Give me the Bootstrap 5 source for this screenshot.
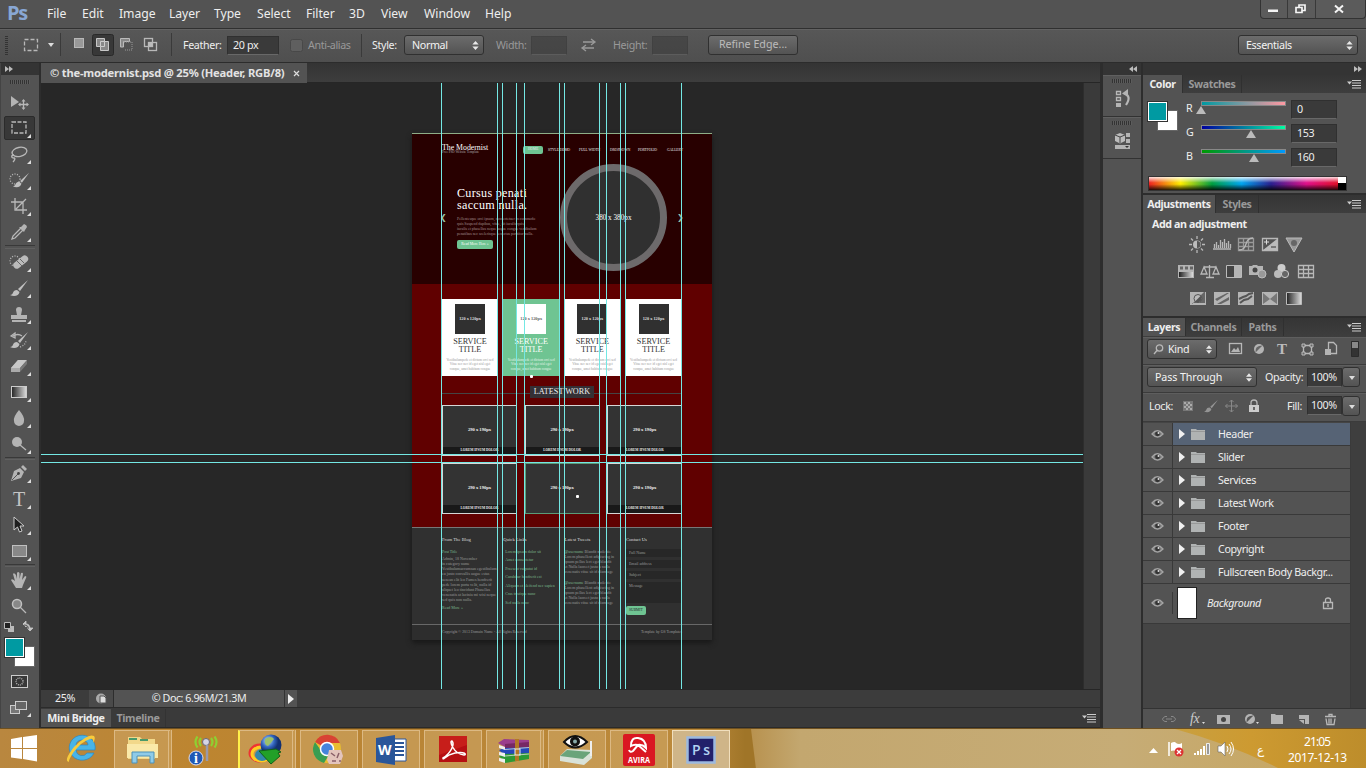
<!DOCTYPE html>
<html lang="en">
<head>
<meta charset="utf-8">
<title>the-modernist.psd</title>
<link href="https://cdn.jsdelivr.net/npm/bootstrap@5.3.0/dist/css/bootstrap.min.css" rel="stylesheet">
<script src="https://cdn.jsdelivr.net/npm/bootstrap@5.3.0/dist/js/bootstrap.bundle.min.js"></script>
<style>
html,body{height:768px;width:1366px;overflow:hidden}
body{background:#282828;color:#eee;font:10.7px/14px "Noto Sans","Open Sans",sans-serif;letter-spacing:-.35px;white-space:nowrap}
svg{display:block;flex:none}
.ic{stroke:#b8b8b8;fill:none;stroke-width:1.3}
.fl{fill:#b4b4b4;stroke:none}
/* menu */
.menubar{height:29px;background:#535353;border-bottom:1px solid #303030;position:relative}
.pslogo{width:47px;padding-left:7px;font:bold 20px/25px "Open Sans",sans-serif;color:#88a7d4;letter-spacing:-1.2px}
.menus{display:grid;grid-template-columns:35px 37px 50px 45px 43px 49px 43px 32px 43px 61px 40px;font-size:12.2px;line-height:27px;letter-spacing:-.05px}
.winctl{margin-left:auto;width:106px;height:19px;border:1px solid #333;border-top:0;border-radius:0 0 4px 4px;background:#5b5b5b}
.winctl>div{border-right:1px solid #393939}
.winctl>div:last-child{border:0}
/* options */
.optbar{height:34px;background:linear-gradient(#575757,#4f4f4f);border-bottom:1px solid #2c2c2c;border-top:1px solid #626262}
.optrow{padding-bottom:2px}
.optrow>*{flex:none}
.fieldbox{background:#3a3a3a;border:1px solid #303030;border-bottom-color:#686868;height:19px;line-height:17px;padding-left:5px}
.selbox{background:linear-gradient(#6c6c6c,#535353);border:1px solid #303030;border-radius:3px;height:20px;line-height:17px;padding-left:7px;color:#f3f3f3}
.selbox svg{margin-left:auto}
.dimtxt{color:#999}
/* main areas */
.mainarea{height:665px;background:#2d2d2d}
.tools{width:39px;background:#535353;border-left:1px solid #444;margin-right:2px}
.darkhead{height:12px;background:#343434;flex:none}
.grip{height:14px;display:flex;justify-content:center;align-items:center}
.grip i{width:20px;height:4px;background:repeating-linear-gradient(90deg,#333 0 1px,#5c5c5c 1px 2px)}
.tool{height:26px;display:flex;align-items:center;justify-content:center;position:relative;padding-right:2px}
.tool::after{content:"";position:absolute;right:8px;bottom:3px;border:2px solid;border-color:transparent #ddd #ddd transparent}
.tool.bare::after{display:none}
.tool.on span{background:#383838;border:1px solid #2b2b2b;border-radius:2px;width:31px;height:24px;display:flex;align-items:center;justify-content:center}
.tsep{height:3px;margin:0 4px;border-top:1px solid #393939;border-bottom:1px solid #606060}
.center{width:1060px;background:#2a2a2a}
.tabstrip{height:20px;background:linear-gradient(#343434,#3d3d3d);border-bottom:1px solid #262626}
.doctab{width:266px;height:20px;background:#535353;padding-left:9px;font:bold 11.2px/20px "Noto Sans",sans-serif;letter-spacing:-.22px;color:#e2e2e2}
.canvasrow{height:606px}
.artboard{width:1042px;background:#272727;position:relative;padding:50px 0 0 371px}
.vscroll{flex:1;background:#3a3a3a;border-left:1px solid #2d2d2d}
.statusbar{height:18px;background:#3c3c3c;border-top:1px solid #262626}
.statusbar>div{line-height:16px;text-align:center}
.bridge{height:20px;background:#3a3a3a;border-top:1px solid #2b2b2b;line-height:18px;font-weight:bold;font-size:10.7px}
.seltab{background:#535353;color:#eee}
.iconcol{width:38px;background:#535353;margin-left:3px;margin-right:2px}
.iconcell{height:42px;border-bottom:1px solid #323232;border-top:1px solid #606060}
.panels{width:223px}
.ptabs{height:18px;background:linear-gradient(#353535,#3e3e3e);font-weight:bold;line-height:18px;font-size:10.6px;color:#999}
.ptabs>span{text-align:center;border-right:1px solid #303030;height:18px}
.ptabs>svg{margin-left:auto;margin-right:5px}
.pbody{background:#535353}
.swatches{width:28px;height:30px;position:relative;margin:9px 0 0 6px}
.swfg,.swbg{position:absolute;width:19px;height:19px;background:#009aa2;border:1px solid #fff;outline:1px solid #333;left:0;top:0;z-index:1}
.swbg{background:#fff;left:10px;top:9px;z-index:0;outline-color:#666}
.slid{display:grid;grid-template-columns:14px 91px 46px;height:24px}
.bar{height:5px;width:85px;margin-top:1px;border:1px solid #888}
.br{background:linear-gradient(90deg,#009aa2,#ff99a2)}.bg2{background:linear-gradient(90deg,#0000a0,#00ffa0)}.bb{background:linear-gradient(90deg,#009900,#0099ff)}
.knob{width:0;border:5px solid transparent;border-bottom:8px solid #bbb;border-top:0;margin-left:-5px}
.spectrum{height:15px;width:199px;margin:1px 0 0 5px;border:1px solid #333;background:linear-gradient(rgba(255,255,255,.85),transparent 45%,transparent 55%,rgba(0,0,0,.85)),linear-gradient(90deg,#e22,#fe0 16%,#00a040 32%,#00a5f0 47%,#2a2090 62%,#e0108a 80%,#e21010)}
.bw{width:8px;height:13px;margin-left:auto;background:linear-gradient(#fff 50%,#000 50%)}
.frow{background:#535353;border-bottom:1px solid #3b3b3b;border-top:1px solid #5e5e5e;padding-bottom:3px}
.lay{height:23px;width:207px;border-bottom:1px solid #393939;background:#535353;display:grid;grid-template-columns:30px 45px 1fr;align-items:center}
.lay>div{height:22px;display:flex;align-items:center}
.lay>div:first-child{border-right:1px solid #393939;justify-content:center}
.lay.sel>div+div{background:#566375}
.lay.laybg{height:40px}
.pfoot{height:20px;background:#535353;border-top:1px solid #333}
/* mock page */
.mock{width:300px;height:507px;font-family:"Liberation Serif",serif;letter-spacing:0;box-shadow:0 3px 5px #181818;background:#303030;line-height:1}
.mhero{height:151px;background:#280000;border-top:1px solid #8fae88;padding:0 30px}
.mnav{height:30px;padding-top:10px;display:grid;grid-template-columns:81px 25px 31px 31px 28px 29px 15px;font-size:3.5px;color:#eee}
.mnav>span{padding-top:5px}
.mlogo{font-size:7.8px;color:#fff;line-height:7px;white-space:nowrap}
.mlogo small{display:block;font-size:3.3px;line-height:3px;color:#aaa}
.mnav .pill{background:#6fc492;border-radius:2px;width:20px;height:8px;margin-top:2px;padding:2px 0 0 5px}
.slide{display:grid;grid-template-columns:15px 103px 107px 14px;color:#fff;width:240px}
.slide h1{font:12.1px/11.5px "Liberation Serif",serif;letter-spacing:.3px;margin:24px 0 6px;color:#fff}
.slide p{font-size:3.85px;line-height:4.9px;margin:0;color:#a08c8c}
.slide .arr{font-size:8px;padding-top:50px;color:#9bc2a4;margin:0 -3px 0 -2px}
.pillb{display:block;background:#6fc492;border-radius:2px;width:36px;height:9px;font-size:3.7px;text-align:center;line-height:9px;margin-top:3px}
.circ{width:107px;height:107px;border:7px solid #6d6a6b;border-radius:50%;background:#303030;display:flex;align-items:center;justify-content:center;font-size:7.2px;padding-top:2px}
.mred{height:243px;background:#600000;padding:15px 30px 0}
.svc{display:grid;grid-template-columns:repeat(4,56px);column-gap:5.2px;height:77px}
.svc>div{background:#fff;color:#333;text-align:center;padding-top:5px;font-size:8.2px;line-height:8px}
.svc b{display:flex;width:30px;height:30px;background:#303030;color:#ddd;margin:0 auto 4px;font:bold 4.3px/30px "Liberation Serif",serif;align-items:center;justify-content:center}
.svc p{font-size:3.4px;line-height:4.4px;color:#999;margin:4px 0 0}
.svc .grn{background:#6fc492;color:#fff}.svc .grn b{background:#fff;color:#666}.svc .grn p{color:#e4f5ea}
.lw{height:29px;display:flex;justify-content:center;align-items:center;padding-top:3px;background:linear-gradient(#444,#444) 0 17px/240px 1px no-repeat}
.lw span{background:#353035;width:64px;height:12px;font-size:8.2px;line-height:12px;text-align:center;color:#eee}
.port{display:grid;grid-template-columns:repeat(3,75px);column-gap:7.6px;row-gap:7px}
.port>div{height:51px;border:1px solid #d6d6d6;background:#333;text-align:center;font:bold 4.6px/47px "Liberation Serif",serif;color:#eee}
.port i{display:block;font:bold 3.4px/7px "Liberation Serif",serif;height:8px;background:#191919;margin-top:-6px}
.port .act{border-color:#5b9b78}
.mfoot{height:97px;border-top:1px solid #777;background:#303030;padding:9px 30px 0;display:grid;grid-template-columns:61.3px 61.3px 61.3px 56px;font-size:4px;line-height:5.2px;color:#999}
.mfoot h6{font:4.7px/5px "Liberation Serif",serif;color:#ddd;margin:0 0 6.5px}
.mfoot p{margin:0}
.mfoot li{height:8.6px}
.mfoot .g{color:#79b78d}
.inp{background:#272727;height:8px;margin-bottom:3px;padding:2px 3px;line-height:4px}
.mcopy{height:16px;background:#2d2d2d;border-top:1px solid #686868;padding:5px 30px 0;font-size:3.8px;line-height:5px;color:#999}
.gl{position:absolute;top:0;bottom:0;width:1px;background:#74e8e4}
.gh{position:absolute;left:0;right:0;height:1px;background:#74e8e4}
/* taskbar */
.task{height:41px;border-top:1px solid #6e5020;letter-spacing:0;background:linear-gradient(90deg,#b9873f,#bd8530 200px,#b98536 420px,#bc8a3b 700px,#a07528 745px)}
.tb{width:58px;height:39px;margin:1px 4px 0 0;border:1px solid #dcb983;background:rgba(205,165,100,.6);display:flex;align-items:center;justify-content:center;flex:none}
.tb.none{border-color:transparent;background:none}
.tb.stack{border-right:4px double #dcb983}
</style>
</head>
<body>
<svg width="0" height="0" class="position-absolute">
<defs>
<symbol id="ud" viewBox="0 0 7 10"><path d="M0 4 3.500 0 7 4zM0 6l3.500 4L7 6z" fill="#e8e8e8"/></symbol>
<symbol id="pm" viewBox="0 0 14 9"><path d="M0 2h5L2.500 5z" fill="#ccc"/><path d="M5 1h9M5 3.500h9M5 6h9M5 8.500h9" stroke="#ccc"/></symbol>
<symbol id="eye" viewBox="0 0 13 10"><path d="M1 5Q6.500-1.500 12 5 6.500 11 1 5z" fill="#777" stroke="#a4a4a4" stroke-width="1.300"/><circle cx="6.500" cy="4.800" r="2.400" fill="#333"/><circle cx="7.500" cy="4" r="1" fill="#ddd"/></symbol>
<symbol id="fold" viewBox="0 0 26 12"><path d="M0 1v10l6-5z" fill="#f0f0f0"/><path d="M12 1h5l1 1h8v10H12z" fill="#b0b3b3"/><path d="M12 3.500h14" stroke="#888" stroke-width=".6"/></symbol>
<symbol id="brush" viewBox="0 0 20 18"><path d="M19 1 9 10l2 2z" fill="#c0c0c0"/><path d="M1 16c4 0 2-5 7-5l2.500 2C10 17 5 18 1 16z" fill="#c0c0c0"/></symbol>
<linearGradient id="gr"><stop stop-color="#222"/><stop offset="1" stop-color="#ddd"/></linearGradient>
<radialGradient id="globe" cx=".35" cy=".3"><stop stop-color="#bfe0ff"/><stop offset=".6" stop-color="#3366c0"/><stop offset="1" stop-color="#123070"/></radialGradient>
<linearGradient id="sand"><stop stop-color="#b8924f"/><stop offset=".08" stop-color="#c3a76f"/><stop offset=".6" stop-color="#c6ac76"/><stop offset="1" stop-color="#c7a55c"/></linearGradient>
<linearGradient id="gold"><stop stop-color="#c9a040"/><stop offset=".4" stop-color="#cd9a31"/><stop offset="1" stop-color="#bd8d2b"/></linearGradient>
</defs></svg>

<header class="menubar d-flex">
  <div class="pslogo">Ps</div>
  <nav class="menus"><span>File</span><span>Edit</span><span>Image</span><span>Layer</span><span>Type</span><span>Select</span><span>Filter</span><span>3D</span><span>View</span><span>Window</span><span>Help</span></nav>
  <div class="winctl d-flex">
    <div><svg width="26" height="18"><path d="M7 9.500h10v2.500H7z" fill="#f5f5f5"/></svg></div>
    <div><svg width="27" height="18"><path d="M11 7.500V5h6v5.500h-3M8 7.500h6v5H8z" fill="none" stroke="#f5f5f5" stroke-width="1.700"/></svg></div>
    <div><svg width="46" height="18"><path d="m19 5.500 8 7m0-7-8 7" stroke="#f5f5f5" stroke-width="2"/></svg></div>
  </div>
</header>

<section class="optbar">
 <div class="d-flex optrow align-items-center h-100">
  <svg width="172" height="32"><path d="M6.500 7v19" stroke="#333" stroke-width="3" stroke-dasharray="1 1"/><rect x="24.500" y="10.500" width="13" height="11" class="ic" stroke-dasharray="4 2"/><path d="m48 14 6 0-3 4z" fill="#ddd"/><path d="M60.500 4v23M171.500 4v23" stroke="#3a3a3a"/>
   <rect x="74.500" y="9.500" width="9" height="9" fill="#999" stroke="#b8b8b8"/>
   <rect x="92.500" y="5.500" width="21" height="21" rx="2" fill="#383838" stroke="#292929"/><path d="M96.500 9.500h8v3h4v9h-8v-4h-4z" fill="#888" stroke="#c8c8c8"/><path d="M100.500 17v-4.500h4v5h-4" stroke="#ccc" fill="none"/>
   <path d="M120.500 18v-8.500h9v3h-6v5.500z" fill="#888" stroke="#bbb"/><path d="M124 13h8v8h-8" fill="none" stroke="#999" stroke-dasharray="1 1"/>
   <rect x="144.500" y="9.500" width="8" height="8" class="ic"/><rect x="148.500" y="13.500" width="8" height="8" class="ic"/><rect x="148" y="13" width="4" height="4" fill="#bbb"/></svg>
  <span style="width:55px;padding-left:11px">Feather:</span>
  <div class="fieldbox" style="width:52px">20 px</div>
  <svg width="28" height="20" class="ms-1"><rect x="7.500" y="4.500" width="12" height="12" rx="2" fill="#5f5f5f" stroke="#484848"/></svg>
  <span class="dimtxt" style="width:50px;margin-left:-3px">Anti-alias</span>
  <svg width="14" height="30"><path d="M3.500 4v23" stroke="#3a3a3a"/></svg>
  <span style="width:32px">Style:</span>
  <div class="selbox d-flex align-items-center pe-1" style="width:80px">Normal<svg width="7" height="9"><use href="#ud"/></svg></div>
  <span class="dimtxt" style="width:35px;margin-left:12px">Width:</span><div class="fieldbox opacity-50" style="width:36px"></div>
  <svg width="46" height="16"><path d="M16 5h11M16 11h11m-3-9 4 3-4 3m-5 0-4 3 4 3" class="ic" stroke-width="1" opacity=".7"/></svg>
  <span class="dimtxt" style="width:39px">Height:</span><div class="fieldbox opacity-50" style="width:36px"></div>
  <div class="selbox dimtxt text-center p-0" style="width:90px;margin-left:20px;color:#bbb;letter-spacing:0">Refine Edge...</div>
  <div class="selbox d-flex align-items-center pe-1 ms-auto me-2" style="width:120px">Essentials<svg width="7" height="9"><use href="#ud"/></svg></div>
 </div>
</section>

<main class="mainarea d-flex">
 <aside class="tools">
  <div class="darkhead"><svg width="20" height="12"><path d="m4 3 4 3-4 3zm4 0 4 3-4 3z" fill="#bbb"/></svg></div>
  <div class="grip"><i></i></div>
  <div class="tool bare"><svg width="20" height="18"><path d="M2 3v11l8-5z" class="fl"/><path d="M14.500 7v9M10 11.500h9" class="ic"/><path d="m12.500 8.500 2-2.500 2 2.500zm0 6 2 2.500 2-2.500zM11.500 9.500 9 11.500l2.500 2zm6 0 2.500 2-2.500 2z" class="fl"/></svg></div>
  <div class="tool on"><span><svg width="16" height="14"><rect x="1" y="1" width="14" height="11" class="ic" stroke-dasharray="4 1.500"/></svg></span></div>
  <div class="tool"><svg width="20" height="18"><ellipse cx="10.500" cy="7" rx="7.500" ry="4.500" transform="rotate(-12 10 7)" class="ic" stroke-width="1.600"/><path d="M5 10c-3 0-3 3 0 3 2 0 0 3-1 4" class="ic"/></svg></div>
  <div class="tool"><svg width="22" height="18"><circle cx="7" cy="8" r="5" class="ic" stroke-dasharray="1 1.500"/><svg x="4" width="18" height="18"><use href="#brush"/></svg></svg></div>
  <div class="tool"><svg width="18" height="18"><path d="M5 1v12h12M1 5h12v12M6 12 16 2" class="ic" stroke-width="2"/></svg></div>
  <div class="tool"><svg width="18" height="18"><path d="m2 16 1-3 8-8 2 2-8 8z" class="ic"/><path d="m9 4 5 5 1-2 2-3q0-2-3-3l-3 3z" class="fl"/></svg></div>
  <div class="tsep" style="height:4px"></div>
  <div class="tool"><svg width="22" height="18"><circle cx="7" cy="8" r="5" class="ic" stroke-dasharray="1 1.500"/><rect x="4" y="6" width="17" height="7" rx="3.500" fill="#bababa" transform="rotate(-38 12 9)"/><path d="m9 8 5 5m-2-7 4 4" stroke="#666"/></svg></div>
  <div class="tool"><svg width="20" height="18"><use href="#brush"/></svg></div>
  <div class="tool"><svg width="18" height="18"><path d="M7 10 6 5a3 3 0 1 1 6 0l-1 5h6v4H1v-4zM2 15h14v2H2z" class="fl"/></svg></div>
  <div class="tool"><svg width="20" height="18"><use href="#brush"/><path d="M4 5q5-3 9 0M2 5l4-3v5z" class="ic"/><path d="M11 16q6-2 6-7" class="ic" stroke-dasharray="1 1.500"/></svg></div>
  <div class="tool"><svg width="20" height="16"><path d="m2 10 7-8h9l-7 8v4H2z" fill="#aaa"/><path d="m2 10 7-8h9l-7 8z" fill="#c8c8c8"/><path d="m11 10 7-8v4l-7 8z" fill="#777"/></svg></div>
  <div class="tool"><svg width="16" height="12"><rect x=".5" y=".5" width="15" height="11" fill="url(#gr)" stroke="#ccc"/></svg></div>
  <div class="tool"><svg width="16" height="18"><path d="M8 1q6 7 5 11a5 5 0 0 1-10 0Q2 8 8 1z" class="fl"/></svg></div>
  <div class="tool"><svg width="18" height="18"><circle cx="7" cy="7" r="5" class="fl"/><path d="m10 10 6 5" class="ic" stroke-width="2.500"/></svg></div>
  <div class="tsep"></div>
  <div class="tool"><svg width="18" height="18"><path d="m1 17 3-10 6-3 4 4-3 6zM11 3l2-2 4 4-2 2z" class="fl"/><path d="m2 16 6-6" stroke="#555"/><circle cx="8.500" cy="9.500" r="1.400" fill="#444"/></svg></div>
  <div class="tool" style="font:20px/26px 'Liberation Serif',serif;color:#c4c4c4">T</div>
  <div class="tool"><svg width="14" height="18"><path d="M2 1v13l3.500-3 2 5 2.500-1-2-5h4z" fill="#1f1f1f" stroke="#ccc"/></svg></div>
  <div class="tool"><svg width="15" height="12"><rect x=".5" y=".5" width="14" height="11" fill="#888" stroke="#c0c0c0"/></svg></div>
  <div class="tsep"></div>
  <div class="tool"><svg width="18" height="18"><path d="M6 17 1 9q1-2 4 1L3 3q1-2 3 1l1 4V2q1-2 2.500 0v6l1.500-6q2-1 2 1l-1 6 3-4q2 0 1 2l-3 7-1 3z" class="fl"/></svg></div>
  <div class="tool bare"><svg width="18" height="18"><circle cx="7" cy="7" r="4.500" fill="#888" stroke="#c0c0c0" stroke-width="1.500"/><path d="m10 10 6 6" class="ic" stroke-width="2.500"/></svg></div>
  <svg width="38" height="16"><path d="M7 7h6v6H7z" fill="#bbb"/><path d="M3.500 3.500h6v6h-6z" fill="#222" stroke="#bbb"/><path d="M22 5h3q4 0 4 5m-7-5 3-3v6zm7 7-3-3h6z" stroke="#c6c6c6" fill="#c6c6c6" stroke-width=".8"/><path d="M23 6q5 0 4 4" stroke="#535353" fill="none"/></svg>
  <div class="swatches" style="margin:3px 0 0 4px"><div class="swfg"></div><div class="swbg"></div></div>
  <div class="tool bare"><svg width="17" height="13"><rect x=".5" y=".5" width="16" height="12" fill="#383838" stroke="#ccc"/><circle cx="8.500" cy="6.500" r="3.500" class="ic" stroke-dasharray="1 1"/></svg></div>
  <div class="tool"><svg width="18" height="15"><rect x=".5" y="5.500" width="9" height="8" fill="#777" stroke="#ccc"/><rect x="5.500" y="1.500" width="11" height="8" fill="#666" stroke="#ccc"/></svg></div>
 </aside>

 <section class="center d-flex flex-column">
  <div class="tabstrip"><div class="doctab d-flex"><span>© the-modernist.psd @ 25% (Header, RGB/8)</span><svg class="ms-auto" style="margin:7px 7px 0 0" width="7" height="7"><path d="m1 1 5 5m0-5-5 5" stroke="#ddd" stroke-width="1.200"/></svg></div></div>
  <div class="canvasrow d-flex">
   <div class="artboard">
    <article class="mock">
     <div class="mhero">
      <div class="mnav"><div class="mlogo">The Modernist<small>Free PSD Website Template</small></div><div class="pill">HOME</div><span>STYLE DEMO</span><span>FULL WIDTH</span><span>DROPDOWN</span><span>PORTFOLIO</span><span>GALLERY</span></div>
      <div class="slide"><div class="arr">❮</div><div><h1>Cursus penati<br>saccum nulla.</h1><p>Pellentesque orci ipsum, consectetuer in commodo<br>quis Suspend dapibus, vitae, sit iaculis quis<br>iaculis et phasellus neque augue congue vestibulum<br>penatibus nec scelerisque senectus porttitor nulla.</p><span class="pillb">Read More Here »</span></div><div class="circ">380 x 380px</div><div class="arr text-end">❯</div></div>
     </div>
     <div class="mred">
      <div class="svc">
       <div><b>120 x 120px</b>SERVICE<br>TITLE<p>Vestibulumpede et dictum orci sed<br>Vitae nec nec id eget nisl eget<br>conque, amet habitum congue</p></div>
       <div class="grn"><b>120 x 120px</b>SERVICE<br>TITLE<p>Vestibulumpede et dictum orci sed<br>Vitae nec nec id eget nisl eget<br>conque, amet habitum congue</p></div>
       <div><b>120 x 120px</b>SERVICE<br>TITLE<p>Vestibulumpede et dictum orci sed<br>Vitae nec nec id eget nisl eget<br>conque, amet habitum congue</p></div>
       <div><b>120 x 120px</b>SERVICE<br>TITLE<p>Vestibulumpede et dictum orci sed<br>Vitae nec nec id eget nisl eget<br>conque, amet habitum congue</p></div>
      </div>
      <div class="lw"><span>LATEST WORK</span></div>
      <div class="port"><div>290 x 190px<i>LOREM IPSUM DOLOR</i></div><div>290 x 190px<i>LOREM IPSUM DOLOR</i></div><div>290 x 190px<i>LOREM IPSUM DOLOR</i></div><div>290 x 190px<i>LOREM IPSUM DOLOR</i></div><div class="act">290 x 190px</div><div>290 x 190px<i>LOREM IPSUM DOLOR</i></div></div>
     </div>
     <div class="mfoot">
      <div><h6>From The Blog</h6><p class="g" style="margin-bottom:2px">Post Title</p><p>Admin, 18 November</p><p>in category name</p><p>Vestibulumaccumsan egestibulum<br>eu justo convallis augue estas<br>aenean elit leo Fames hendrerit<br>pede lorem porta velit, nulla id<br>aliquet leo tincidunt Phasellus<br>venenatis at lacinia mi wisi neque<br>sed quis non nulla.</p><p class="g" style="margin-top:2px">Read More »</p></div>
      <div><h6>Quick Links</h6><ul class="list-unstyled m-0 g" style="padding-left:2px"><li>Lorem ipsum dolor sit</li><li>Amet consectetur</li><li>Praesent vulputat id</li><li>Curabitur hendrerit est</li><li>Aliquam et eleifend nec sapien</li><li>Cras tristique nunc</li><li>Sed nulla nunc</li></ul></div>
      <div><h6>Latest Tweets</h6><p><span class="g">@username</span> Blandit molestie<br>Lorem phasellent adipiscing in<br>ipsum pellus lect eget blandit<br>et Nulla laoreet justo a nulla<br>venenatis vitae sit id diam age</p><p style="margin-top:5px"><span class="g">@username</span> Blandit molestie<br>Lorem phasellent adipiscing in<br>ipsum pellus lect eget blandit<br>et Nulla laoreet justo a nulla<br>venenatis vitae sit id diam age</p></div>
      <div><h6>Contact Us</h6><div class="inp">Full Name</div><div class="inp">Email address</div><div class="inp">Subject</div><div class="inp" style="height:21px">Message</div><span class="pillb text-dark" style="width:20px;margin-top:2px">SUBMIT</span></div>
     </div>
     <div class="mcopy d-flex justify-content-between"><span>Copyright © 2013 Domain Name - All Rights Reserved</span><span>Template by OS Templates</span></div>
    </article>
    <svg class="position-absolute" style="left:488px;top:290px" width="52" height="128"><path d="M1 3.500h3M2.500 2v3M47 123.500h3M48.500 122v3" stroke="#fff" stroke-width="2"/></svg>
    <div id="guides"></div>
   </div>
   <div class="vscroll"></div>
  </div>
  <div class="statusbar d-flex"><div style="width:48px">25%</div><div style="width:24px;background:#4a4a4a"><svg width="24" height="17"><circle cx="12" cy="8.500" r="5" fill="#aaa"/><path d="M11 6h4l2 2v5h-6z" fill="#ddd" stroke="#555"/></svg></div><div class="seltab" style="width:171px;border-left:1px solid #2d2d2d;letter-spacing:-.45px">© Doc: 6.96M/21.3M</div><div class="seltab" style="width:13px;border-left:1px solid #333"><svg width="12" height="17"><path d="m3 4 6 5-6 5z" fill="#eee"/></svg></div></div>
  <div class="bridge d-flex align-items-center"><div class="seltab text-center" style="width:70px">Mini Bridge</div><div class="text-center" style="width:55px;color:#999;border-right:1px solid #333">Timeline</div><svg class="ms-auto me-1" width="14" height="10"><use href="#pm"/></svg></div>
 </section>

 <aside class="iconcol">
  <div class="darkhead"><svg width="38" height="12"><path d="m30 3-4 3 4 3zm4 0-4 3 4 3z" fill="#bbb"/></svg></div>
  <div class="iconcell"><div class="grip" style="height:9px"><i></i></div><svg width="38" height="26"><path d="M13.500 6.500h4v3h-4zM13.500 12.500h4v3h-4z" class="ic" stroke-width="1"/><path d="M13 18h5v4h-5z" class="fl"/><path d="M21 8q8 3 2 12" fill="none" stroke="#b8b8b8" stroke-width="2.200"/><path d="M19 8.500 25 4v8z" class="fl"/></svg></div>
  <div class="iconcell"><div class="grip" style="height:9px"><i></i></div><svg width="38" height="28"><path d="m17 6 5 2v6l-5 2.500-5-2.500V8z" fill="#bbb"/><path d="m12 8 5 2 5-2M17 10v6" stroke="#444" fill="none"/><path d="M23 6h4v4h-4zM23 12h4v4h-4zM12 18h15v4H12z" class="fl"/><path d="m22 19 4 0-2 2z" fill="#333"/></svg></div>
 </aside>

 <aside class="panels flex-column d-flex">
  <div class="darkhead"><svg width="223" height="12"><path d="m211 3 4 3-4 3zm4 0 4 3-4 3z" fill="#bbb"/></svg></div>
  <div class="ptabs d-flex align-items-center"><span class="seltab" style="width:40px">Color</span><span style="width:59px">Swatches</span><svg width="14" height="10"><use href="#pm"/></svg></div>
  <div class="pbody" style="height:100px">
   <div class="d-flex" style="height:82px">
    <div class="swatches" style="margin-left:5px"><div class="swfg"></div><div class="swbg"></div></div>
    <div style="margin:7px 0 0 10px">
     <div class="slid"><span style="margin-top:1px">R</span><div class="ps-1" style="margin-left:-3px"><div class="bar br"></div><div class="knob"></div></div><div class="fieldbox">0</div></div>
     <div class="slid"><span style="margin-top:1px">G</span><div class="ps-1" style="margin-left:-3px"><div class="bar bg2"></div><div class="knob" style="margin-left:45px"></div></div><div class="fieldbox">153</div></div>
     <div class="slid"><span style="margin-top:1px">B</span><div class="ps-1" style="margin-left:-3px"><div class="bar bb"></div><div class="knob" style="margin-left:48px"></div></div><div class="fieldbox">160</div></div>
    </div>
   </div>
   <div class="spectrum d-flex"><div class="bw"></div></div>
  </div>
  <div class="ptabs d-flex align-items-center" style="margin-top:2px"><span class="seltab" style="width:73px">Adjustments</span><span style="width:43px">Styles</span><svg width="14" height="10"><use href="#pm"/></svg></div>
  <div class="pbody" style="height:103px;padding:4px 0 0 9px"><b class="d-block" style="letter-spacing:-.4px">Add an adjustment</b>
   <svg width="200" height="80">
    <g transform="translate(-1152 -231)">
     <circle cx="1197" cy="244.500" r="4" fill="#bbb"/><path d="M1197 241v7a3.500 3.500 0 0 0 0-7" fill="#555"/><path d="M1197 236v3m0 11v3m-8-8.500h3m10 0h3m-14-6 2 2m8 8 2 2m0-12-2 2m-8 8-2 2" class="ic"/>
     <path d="M1213 249h18M1214.500 248v-4m2 4v-6m2 6v-3m2 3v-8m2 8v-6m2 6v-9m2 9v-5m2 5v-7m2 7v-4" class="ic" stroke-width="1"/>
     <path d="M1238.500 238.500h15v12h-15zM1238 242.500h15m-15 4h15M1243.500 238v12m5-12v12" class="ic" stroke-width=".6" opacity=".7"/><path d="M1239 250c10 0 4-12 14-12" class="ic" stroke-width="1.500"/>
     <path d="M1262.500 238.500h15v12h-15z" class="ic"/><path d="M1263 250l14-11v11z" fill="#bbb"/><path d="M1264 242h5m-2.500-2.500v5" stroke="#ddd"/><path d="M1271 247h5" stroke="#333"/>
     <path d="M1286 238h16l-8 14z" fill="#999" stroke="#bbb"/><circle cx="1294" cy="243" r="3" fill="#666"/>
     <path d="M1178 265h16v13h-16z" class="fl"/><path d="M1180 268h3m2 0h3m2 0h3" stroke="#666" stroke-width="3"/><path d="M1179 272h14v5h-14z" fill="url(#gr)"/>
     <path d="M1209.500 265v12M1204 267h12M1204 267l-3 7h6zm12 0-3 7h6zM1206 277.500h8" class="ic"/>
     <path d="M1226.500 265.500h15v12h-15z" fill="#444" stroke="#bbb"/><path d="M1234 266h7v11h-7z" class="fl"/>
     <path d="M1249 266h3l1-1h4l1 1h5v9h-14z" class="fl"/><circle cx="1255" cy="270" r="2.500" fill="#444"/><circle cx="1262" cy="274" r="4" fill="#999" stroke="#bbb"/>
     <circle cx="1281.500" cy="268" r="4" fill="#ccc"/><circle cx="1278" cy="274" r="4" fill="#bbb"/><circle cx="1285" cy="274" r="3.600" fill="#666" stroke="#ccc"/>
     <path d="M1298.500 265.500h15v12h-15zM1298 269.500h15m-15 4h15M1303.500 265v12m5-12v12" class="ic" stroke-width="1.400"/>
     <path d="M1190 292h16v13h-16z" class="fl"/><path d="m1192 304 12-12h1v11h-13z" fill="#666"/><circle cx="1198" cy="298.500" r="4" fill="#bbb" stroke="#555"/><path d="m1195 301.500 6-6q2 4-1 6-3 2-5 0z" fill="#555"/>
     <path d="M1214 292h16v13h-16z" class="fl"/><path d="m1215 299 12-6h2l-12 8zm2 5 12-7v3l-8 4z" fill="#666"/>
     <path d="M1238 292h16v13h-16z" class="fl"/><path d="m1239 299 4-2 3-1 3-2 4-1m-13 10 4-3 4-1 4-3" stroke="#555" stroke-width="2" fill="none"/>
     <path d="M1262 292h16v13h-16z" class="fl"/><path d="m1263 293 7 6-7 5zm14 0-7 6 7 5z" fill="#777"/>
     <path d="M1286.500 292.500h15v12h-15z" fill="url(#gr)" stroke="#bbb"/>
    </g></svg>
  </div>
  <div class="ptabs d-flex align-items-center" style="margin-top:2px;height:19px"><span class="seltab" style="width:43px">Layers</span><span style="width:56px">Channels</span><span style="width:42px">Paths</span><svg width="14" height="10"><use href="#pm"/></svg></div>
  <div class="frow d-flex align-items-center" style="height:28px"><div class="selbox d-flex align-items-center pe-1" style="width:70px;margin-left:4px;padding-left:5px"><svg width="15" height="13" style="margin:0"><circle cx="6.500" cy="5" r="3.200" class="ic"/><path d="M4 7.500 1 11" class="ic"/></svg>Kind<svg width="6" height="9"><use href="#ud"/></svg></div>
   <svg width="145" height="24"><rect x="12.500" y="6.500" width="12" height="10" class="ic" stroke-width="1"/><path d="m14 15 3-4 2 2 2-3 2 5z" class="fl"/><circle cx="42" cy="12" r="5" class="fl"/><path d="M38.500 15.500q-1-7 7-7z" fill="#666"/><text x="60" y="17" font-family="Liberation Serif" font-weight="bold" font-size="15" fill="#bbb">T</text><path d="M86.500 8.500h8v8h-8z" class="ic" stroke-width="1"/><path d="M85 7h3v3h-3zm8 0h3v3h-3zm-8 8h3v3h-3zm8 0h3v3h-3z" fill="#666" stroke="#bbb"/><path d="M111.500 16.500v-11h5l3 3v8z" class="ic"/><path d="M108 12h6v6h-6z" class="fl"/><path d="M134.500 4.500h7v15h-7z" fill="#333" stroke="#2b2b2b"/><path d="M135 5h6v6h-6z" fill="#888"/></svg></div>
  <div class="frow d-flex align-items-center" style="height:28px"><div class="selbox d-flex align-items-center pe-1" style="width:110px;margin-left:4px;letter-spacing:-.1px">Pass Through<svg width="6" height="9"><use href="#ud"/></svg></div><span style="width:43px;margin-left:8px">Opacity:</span><div class="fieldbox" style="width:35px;margin-left:-1px;padding-left:3px">100%</div><div class="selbox p-0" style="width:18px"><svg width="15" height="18"><path d="M5 8h6l-3 4z" fill="#ddd"/></svg></div></div>
  <div class="frow d-flex align-items-center" style="height:29px"><span style="margin-left:6px;width:30px">Lock:</span>
   <svg width="108" height="24"><path d="M4 7h10v10H4z" fill="#777"/><path d="M5 8h2v2H5zm4 0h2v2H9zM7 10h2v2H7zm4 0h2v2h-2zm-6 2h2v2H5zm4 0h2v2H9zm-2 2h2v2H7zm4 0h2v2h-2z" fill="#aaa"/><svg x="24" y="5" width="16" height="14" opacity=".6"><use href="#brush"/></svg><path d="M52.500 6v12M46.500 12h12m-8-4 2-2 2 2m-4 8 2 2 2-2m-6-6-2 2 2 2m8-4 2 2-2 2" stroke="#888" fill="none"/><path d="M70 11h10v7H70z" fill="#ccc"/><path d="M72 11V9q0-3 3-3t3 3v2" class="ic"/><path d="M75 13v3" stroke="#444" stroke-width="1.500"/></svg><span style="width:23px">Fill:</span><div class="fieldbox" style="width:35px;margin-left:-3px;padding-left:3px">100%</div><div class="selbox p-0" style="width:18px"><svg width="15" height="18"><path d="M5 8h6l-3 4z" fill="#ddd"/></svg></div></div>
  <div class="d-flex" style="height:287px;background:#454545"><div id="layers" style="width:208px;border-right:1px solid #3a3a3a;padding-top:1px"></div><div class="flex-grow-1" style="background:#3e3e3e"></div></div>
  <div class="pfoot"><svg width="223" height="19"><g transform="translate(-1143 -708)"><path d="M1167 715.500h-2q-5 3 0 5h2m4-5h2q5 3 0 5h-2m-5-2.500h6" stroke="#888" fill="none"/><text x="1190" y="722" font-family="Liberation Serif" font-style="italic" font-size="14" fill="#ccc">fx</text><path d="M1202 721h3l-1.500 2zm54 0h3l-1.500 2z" fill="#ddd"/><path d="M1217 714h13v9h-13z" class="fl"/><circle cx="1223.500" cy="718.500" r="2.500" fill="#444"/><circle cx="1250" cy="718" r="5" class="fl"/><path d="M1246.500 721.500q-1-7 7-7z" fill="#555"/><path d="M1271 713h4l1 1h7v9h-12z" class="fl"/><path d="M1299 714h10v9h-4v-5h-6zM1299 719h5v4z" class="fl"/><path d="M1325 715.500h11m-7 0v-2h3v2m-6 2 1 6h7l1-6m-6 0v5m2-5v5" class="ic" stroke-width="1"/></g></svg></div>
 </aside>
</main>

<footer class="task d-flex">
 <div style="width:54px"><svg width="54" height="39"><path d="m11 10 11-2v11H11zM23 8l14-2v13H23zM11 20h11v10l-11-1.500zM23 20h14v12.500L23 30z" fill="#fff"/></svg></div>
 <div style="width:60px"><svg width="60" height="39"><path fill-rule="evenodd" d="M41 21H22a6 6 0 0 0 11 3h7a13 12.500 0 1 1 1-3zM22 16h12a6 5 0 0 0-12 0z" fill="#48b4e8" stroke="#2a86c4" stroke-width=".7"/><path d="M15 33Q9 32 20 18 34 4 40 7q2 2-1 7 1-5-3-4Q28 12 19 24q-5 8-4 9z" fill="#f8cb3c"/></svg></div>
 <div class="tb stack"><svg width="36" height="32"><path d="M4 3h12l2 2h13v20H4z" fill="#f2d88a"/><path d="M3 10h31v14H3z" fill="#fae9a9"/><path d="M5 5h8M16 6h8" stroke="#4a9a6a" stroke-width="2"/><path d="M8 29V18h22v11h-4v-7H13v7z" fill="#8fcbe8" stroke="#4d91b8"/></svg></div>
 <div class="tb none"><svg width="40" height="34"><circle cx="21" cy="9" r="3.500" fill="#d5d5e5" stroke="#667"/><path d="M22 12v16" stroke="#99a" stroke-width="2.500"/><path d="M16 5q-3 4 0 8M12.500 3.500q-4 5.500 0 11M26 5q3 4 0 8M29.500 3.500q4 5.500 0 11" stroke="#8ed032" stroke-width="2.200" fill="none"/><circle cx="11" cy="25" r="7" fill="#1f59b5" stroke="#dde"/><text x="9" y="30" font-family="Liberation Serif" font-weight="bold" font-size="14" fill="#fff">i</text></svg></div>
 <div class="tb stack" style="border-left:2px solid #fff04a"><svg width="38" height="34"><ellipse cx="13" cy="20" rx="10" ry="8" fill="none" stroke="#e33" stroke-width="3"/><ellipse cx="14" cy="21" rx="9" ry="7" fill="none" stroke="#fc2" stroke-width="3"/><ellipse cx="15" cy="22" rx="7" ry="6" fill="#38a"/><circle cx="24" cy="12" r="10.500" fill="url(#globe)"/><path d="M18 6q6-4 9 0-3 4-6 7-4-1-3-7z" fill="#9ac06a"/><path d="m12 18 17-2 5 3-3 1 2 3-9 8z" fill="#22a028" stroke="#126018"/></svg></div>
 <div class="tb"><svg width="36" height="34"><circle cx="16" cy="16" r="14" fill="#e8bd31"/><path d="M16 16 4 9a14 14 0 0 1 25 1H16z" fill="#d84334"/><path d="M4 9a14 14 0 0 0 9 21l6-10-8-1z" fill="#3a9d52"/><circle cx="16" cy="16" r="6.500" fill="#4584dc" stroke="#fff" stroke-width="1.500"/><path d="M18 17h12l2 6-3 8H18l-2-4z" fill="#e3c4bc"/><path d="m20 20 4 3m4-3-2 5m-5 3h4m3 0h2" stroke="#8a5f68" stroke-width="1.500"/></svg></div>
 <div class="tb"><svg width="32" height="30"><path d="M13 4h18v22H13z" fill="#fff" stroke="#2a5599"/><path d="M18 8h11m-11 4h11m-11 4h11m-11 4h11" stroke="#2a5599" stroke-width="2"/><path d="m1 3 19-3v30L1 27z" fill="#2a5699"/><text x="3" y="20" font-family="Open Sans" font-size="14" font-weight="bold" fill="#fff" textLength="14">W</text></svg></div>
 <div class="tb"><svg width="29" height="30"><path d="M0 1h28v26H0z" fill="#b60f12"/><path d="M0 1h28v9L0 20z" fill="#d22820" opacity=".6"/><path d="M4 23C12 18 16 9 13 6c-3-1 1 13 12 14 3 0 1-4-9-2S4 26 4 23z" fill="none" stroke="#fff" stroke-width="1.500"/></svg></div>
 <div class="tb stack"><svg width="34" height="28"><path d="m1 7 6-4 25 1v5L8 11z" fill="#9a3e8c"/><path d="m8 8 24-2v5L8 13z" fill="#772864"/><path d="m2 14 6-2 24-1v6L8 20z" fill="#2448b8"/><path d="m2 20 6-2 24-1v6L8 27z" fill="#2c9a36"/><path d="M2 9v3l6 2v-3zm0 7v3l6 2v-4zm0 6v3l6 2v-4z" fill="#eee"/><path d="M8 13.500 32 11.500M8 20l24-2" stroke="#ddd" stroke-width=".8"/><path d="m18 3 4 0v22h-4z" fill="#b37825"/><rect x="18" y="13" width="5" height="6" fill="none" stroke="#eee"/></svg></div>
 <div class="tb"><svg width="36" height="34"><path d="M1 23 8 16l25 1v8l-8 7L1 28z" fill="#d9e2d8"/><path d="m1 23 7-6 24 2-8 7z" fill="#6aa47a"/><path d="M32 8v15" stroke="#eee" stroke-width="2"/><path d="M5 9Q16-3 28 9 16 20 5 9z" fill="#fff" stroke="#111" stroke-width="2"/><circle cx="16" cy="8.500" r="5" fill="#111"/><circle cx="16" cy="8.500" r="2" fill="#8aa"/></svg></div>
 <div class="tb"><svg width="32" height="34"><rect y="1" width="32" height="32" rx="2" fill="#da1722"/><path d="M8 13Q8 4 15 5q8 1 8 10-4-4-8-3-4-1-7 1z" fill="none" stroke="#fff" stroke-width="2"/><path d="m15 12-5 6q-3 2-4-1m9-5 8 7" fill="none" stroke="#fff" stroke-width="2"/><text x="5" y="29.500" font-family="Open Sans" font-weight="bold" font-size="8" fill="#fff" textLength="22" lengthAdjust="spacingAndGlyphs">AVIRA</text></svg></div>
 <div class="tb me-0" style="background:#cfb588;border-color:#f1dfbd"><svg width="30" height="28"><rect x="1.500" y="1.500" width="27" height="25" fill="#22206a" stroke="#9cb9df" stroke-width="2.500"/><text x="6" y="19" font-family="Open Sans" font-weight="600" font-size="14" fill="#b2d2f2" textLength="18">Ps</text></svg></div>
 <svg width="636" height="40"><path d="M21 0H636V40H26z" fill="url(#sand)"/><path d="M445 0H636V40H550Q500 15 445 0z" fill="url(#gold)"/><g transform="translate(66)"><path d="m353 24 4.500-5 4.500 5z" fill="#fff"/><path d="M373 13v14" stroke="#fff" stroke-width="1.500"/><path d="M375 14q4-2 5 0 3 2 6 0v8q-4 2-6 0-3-1-5 0z" fill="#fff"/><circle cx="383" cy="23" r="4.500" fill="#d33"/><path d="m381 21 4 4m0-4-4 4" stroke="#fff" stroke-width="1.300"/><path d="M398 24h2v2h-2zm3-2h2v4h-2zm3-2h2v6h-2zm3-3h2v9h-2z" fill="#fff"/><path d="M410.500 14.500h3v11h-3z" fill="#999" stroke="#eee"/><path d="M422 17h3l4-4v14l-4-4h-3z" fill="#fff" stroke="#666" stroke-width=".6"/><path d="M431 17q2 3 0 6m2-8q4 5 0 10m2-12q5 7 0 14" stroke="#fff" fill="none"/><text x="461" y="25" font-family="DejaVu Sans" font-size="12" fill="#fff">ع</text><text x="508" y="17" font-family="Noto Sans" font-size="12" fill="#fff" textLength="27">21:05</text><text x="492" y="33" font-family="Noto Sans" font-size="12" fill="#fff" textLength="59">2017-12-13</text></g></svg>
</footer>
<script>
const guides=document.getElementById('guides');
[441,497,502,516,524,559,564,599,606,620,625,681].forEach(x=>guides.insertAdjacentHTML('beforeend',`<div class="gl" style="left:${x-41}px"></div>`));
[454,462].forEach(y=>guides.insertAdjacentHTML('beforeend',`<div class="gh" style="top:${y-83}px"></div>`));
const eye='<div><svg width="13" height="10"><use href="#eye"/></svg></div>';
document.getElementById('layers').innerHTML=['Header','Slider','Services','Latest Work','Footer','Copyright','Fullscreen Body Backgr...'].map((n,i)=>`<div class="lay ${i?'':'sel'}">${eye}<div style="padding-left:6px"><svg width="26" height="12"><use href="#fold"/></svg></div><div>${n}</div></div>`).join('')+
`<div class="lay laybg">${eye}<div style="padding-left:4px"><svg width="20" height="32"><rect x=".5" y=".5" width="19" height="31" fill="#fff" stroke="#222"/></svg></div><div class="fst-italic" style="margin-left:-11px">Background<svg class="ms-auto me-3" width="12" height="13"><path d="M1.500 5.500h9v6h-9zM3.500 5V3q0-2 2.500-2t2.500 2v2M6 7v3" class="ic" stroke-width="1.200"/></svg></div></div>`;
</script>
</body>
</html>
